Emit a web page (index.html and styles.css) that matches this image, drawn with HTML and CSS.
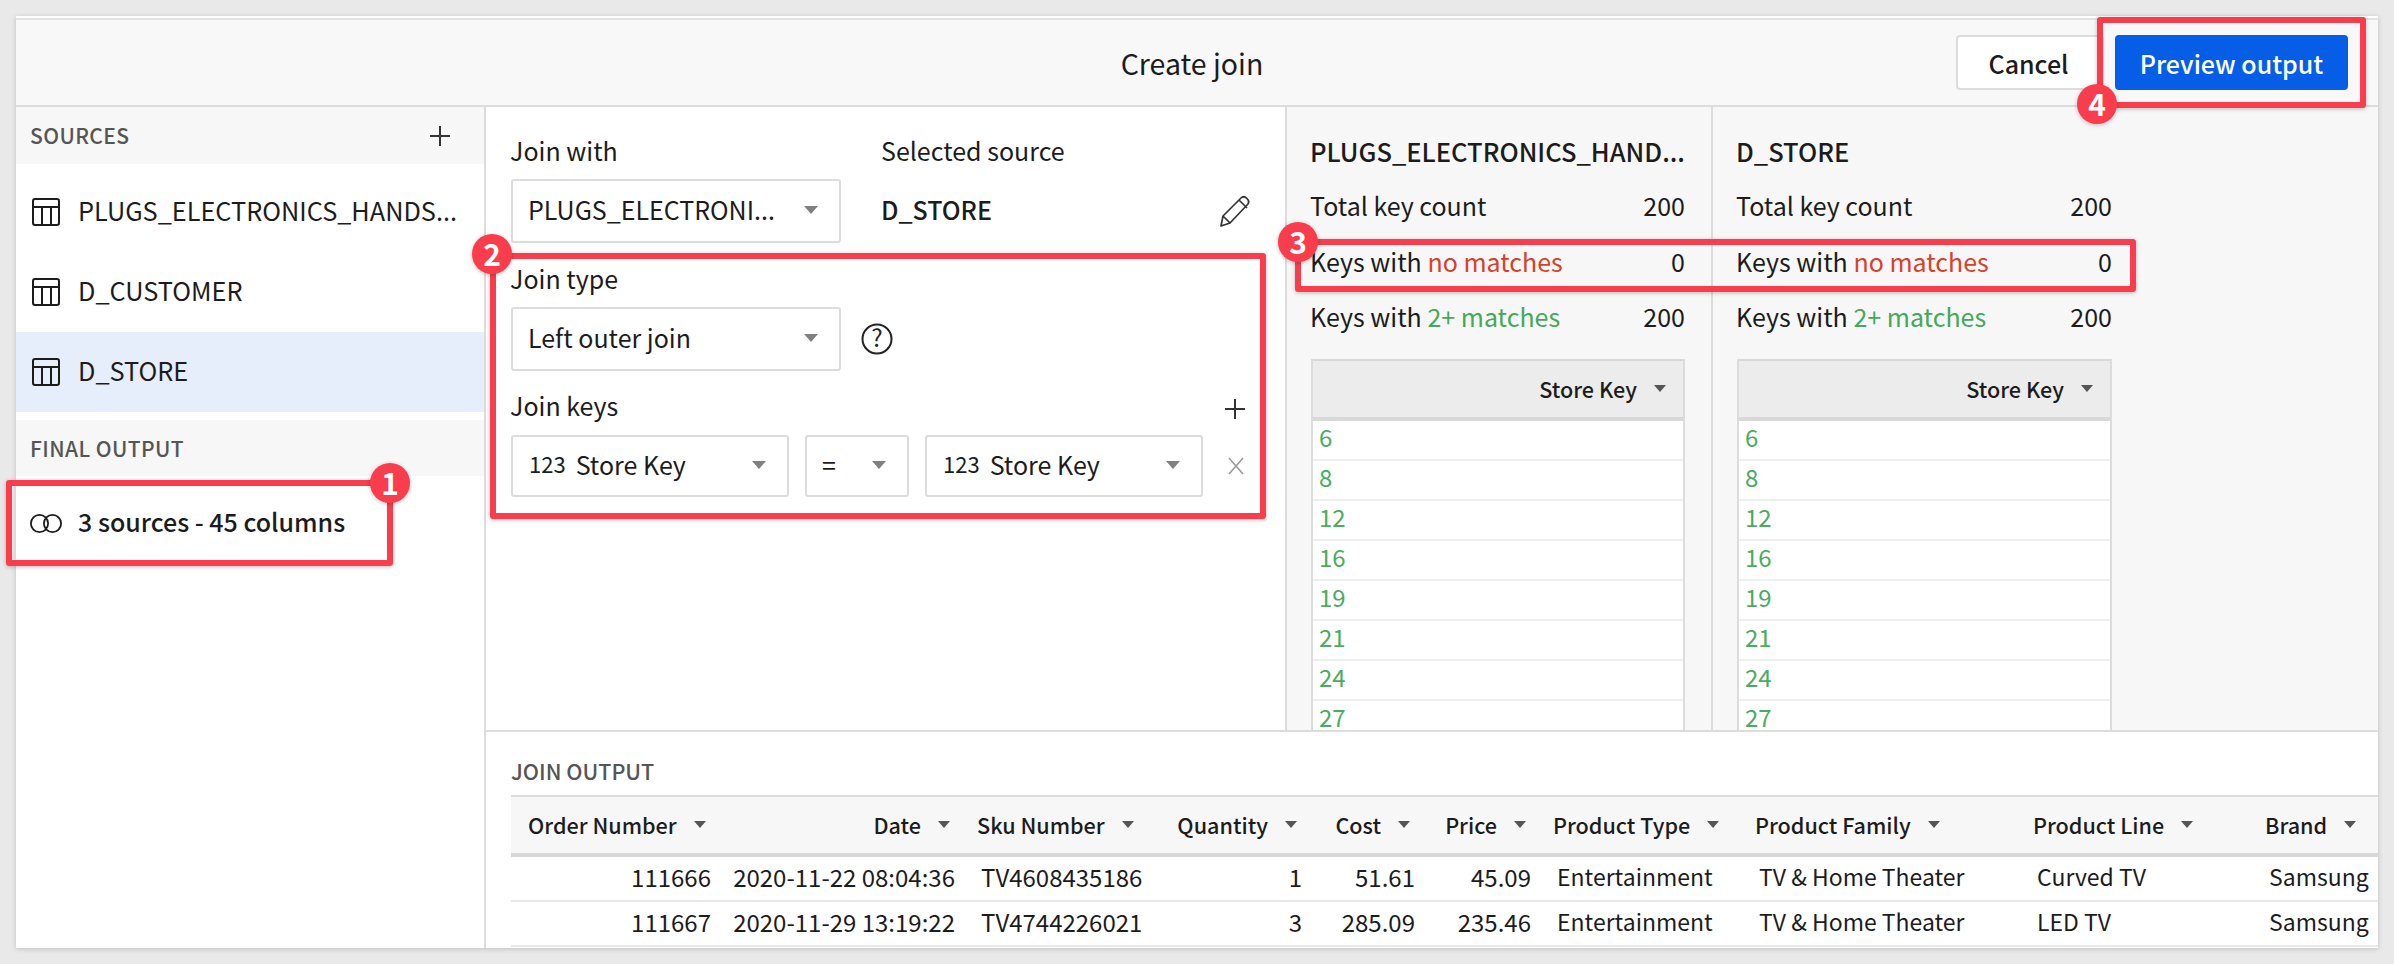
FILE: index.html
```html
<!DOCTYPE html>
<html lang="en">
<head>
    <meta charset="UTF-8">
    <title>Create join</title>
    <link rel="stylesheet" href="styles.css">
</head>
<body>
    <svg class="defs">
        <symbol id="tableIcon" viewBox="0 0 28 28">
            <rect x="1" y="1" width="26" height="26" rx="2" fill="none" stroke="currentColor" stroke-width="2"/>
            <path d="M1 9h26M10 9v18M19 9v18" fill="none" stroke="currentColor" stroke-width="2"/>
        </symbol>
        <symbol id="plusIcon" viewBox="0 0 20 20">
            <path d="M10 0v20M0 10h20" fill="none" stroke="currentColor" stroke-width="2"/>
        </symbol>
    </svg>

    <div class="dialog">
        <header class="topbar">
            <h1 class="title">Create join</h1>
            <div class="actions">
                <button class="btn btn-cancel">Cancel</button>
                <button class="btn btn-primary">Preview output</button>
            </div>
        </header>

        <div class="body">
            <aside class="sidebar">
                <div class="side-head side-head-sources">
                    <span>SOURCES</span>
                    <svg class="plus"><use href="#plusIcon"/></svg>
                </div>
                <div class="side-item"><svg class="table-icon"><use href="#tableIcon"/></svg><span>PLUGS_ELECTRONICS_HANDS...</span></div>
                <div class="side-item"><svg class="table-icon"><use href="#tableIcon"/></svg><span>D_CUSTOMER</span></div>
                <div class="side-item side-item-active"><svg class="table-icon"><use href="#tableIcon"/></svg><span>D_STORE</span></div>
                <div class="side-head side-head-final"><span>FINAL OUTPUT</span></div>
                <div class="side-item side-item-output">
                    <svg class="venn" viewBox="0 0 32 19"><circle cx="9.500" cy="9.500" r="8.600" fill="none" stroke="currentColor" stroke-width="1.800"/><circle cx="22.500" cy="9.500" r="8.600" fill="none" stroke="currentColor" stroke-width="1.800"/></svg>
                    <strong>3 sources - 45 columns</strong>
                </div>
            </aside>

            <main class="main">
                <div class="upper">
                    <section class="config">
                        <div class="config-top">
                            <div class="field-left">
                                <div class="label">Join with</div>
                                <div class="select select-wide"><span>PLUGS_ELECTRONI...</span><i class="caret"></i></div>
                            </div>
                            <div class="field-right">
                                <div class="label">Selected source</div>
                                <div class="selected-row">
                                    <strong>D_STORE</strong>
                                    <svg class="pencil" viewBox="0 0 32 33"><path d="M2 31l2-10L22 3c1.500-1.500 4-1.500 6 .5s2 4.500.5 6L11 28zM4 21l7 7M20 5l8 8" fill="none" stroke="currentColor" stroke-width="1.700" stroke-linejoin="round"/></svg>
                                </div>
                            </div>
                        </div>

                        <div class="label label-type">Join type</div>
                        <div class="type-row">
                            <div class="select select-wide"><span>Left outer join</span><i class="caret"></i></div>
                            <svg class="help" viewBox="0 0 32 32"><circle cx="16" cy="16" r="14.500" fill="none" stroke="currentColor" stroke-width="2"/><text x="16" y="24" text-anchor="middle" class="help-mark">?</text></svg>
                        </div>

                        <div class="keys-head">
                            <div class="label">Join keys</div>
                            <svg class="plus"><use href="#plusIcon"/></svg>
                        </div>
                        <div class="keys-row">
                            <div class="select select-key"><span class="key-name"><small>123</small>Store Key</span><i class="caret"></i></div>
                            <div class="select select-op"><span>=</span><i class="caret"></i></div>
                            <div class="select select-key"><span class="key-name"><small>123</small>Store Key</span><i class="caret"></i></div>
                            <svg class="remove" viewBox="0 0 18 18"><path d="M2 1l14 16M16 1L2 17" fill="none" stroke="currentColor" stroke-width="1.600"/></svg>
                        </div>
                    </section>

                    <section class="stats stats-first">
                        <h2 class="stats-title">PLUGS_ELECTRONICS_HAND...</h2>
                        <div class="stat-row"><span>Total key count</span><span>200</span></div>
                        <div class="stat-row"><span>Keys with <em class="bad">no matches</em></span><span>0</span></div>
                        <div class="stat-row"><span>Keys with <em class="good">2+ matches</em></span><span>200</span></div>
                        <div class="key-table">
                            <div class="key-head">Store Key<i class="caret caret-dark"></i></div>
                            <div class="key-cell">6</div>
                            <div class="key-cell">8</div>
                            <div class="key-cell">12</div>
                            <div class="key-cell">16</div>
                            <div class="key-cell">19</div>
                            <div class="key-cell">21</div>
                            <div class="key-cell">24</div>
                            <div class="key-cell">27</div>
                        </div>
                    </section>

                    <section class="stats stats-last">
                        <h2 class="stats-title">D_STORE</h2>
                        <div class="stat-row"><span>Total key count</span><span>200</span></div>
                        <div class="stat-row"><span>Keys with <em class="bad">no matches</em></span><span>0</span></div>
                        <div class="stat-row"><span>Keys with <em class="good">2+ matches</em></span><span>200</span></div>
                        <div class="key-table">
                            <div class="key-head">Store Key<i class="caret caret-dark"></i></div>
                            <div class="key-cell">6</div>
                            <div class="key-cell">8</div>
                            <div class="key-cell">12</div>
                            <div class="key-cell">16</div>
                            <div class="key-cell">19</div>
                            <div class="key-cell">21</div>
                            <div class="key-cell">24</div>
                            <div class="key-cell">27</div>
                        </div>
                    </section>
                </div>

                <section class="output">
                    <div class="output-label">JOIN OUTPUT</div>
                    <div class="grid grid-head">
                        <div class="th">Order Number<i class="caret caret-dark"></i></div>
                        <div class="th num">Date<i class="caret caret-dark"></i></div>
                        <div class="th">Sku Number<i class="caret caret-dark"></i></div>
                        <div class="th num">Quantity<i class="caret caret-dark"></i></div>
                        <div class="th num">Cost<i class="caret caret-dark"></i></div>
                        <div class="th num">Price<i class="caret caret-dark"></i></div>
                        <div class="th">Product Type<i class="caret caret-dark"></i></div>
                        <div class="th">Product Family<i class="caret caret-dark"></i></div>
                        <div class="th">Product Line<i class="caret caret-dark"></i></div>
                        <div class="th">Brand<i class="caret caret-dark"></i></div>
                    </div>
                    <div class="grid grid-row">
                        <div class="td num">111666</div>
                        <div class="td num">2020-11-22 08:04:36</div>
                        <div class="td code">TV4608435186</div>
                        <div class="td num">1</div>
                        <div class="td num">51.61</div>
                        <div class="td num">45.09</div>
                        <div class="td">Entertainment</div>
                        <div class="td">TV &amp; Home Theater</div>
                        <div class="td">Curved TV</div>
                        <div class="td">Samsung</div>
                    </div>
                    <div class="grid grid-row">
                        <div class="td num">111667</div>
                        <div class="td num">2020-11-29 13:19:22</div>
                        <div class="td code">TV4744226021</div>
                        <div class="td num">3</div>
                        <div class="td num">285.09</div>
                        <div class="td num">235.46</div>
                        <div class="td">Entertainment</div>
                        <div class="td">TV &amp; Home Theater</div>
                        <div class="td">LED TV</div>
                        <div class="td">Samsung</div>
                    </div>
                </section>
            </main>
        </div>
    </div>

    <!-- callouts drawn over the screenshot -->
    <div class="mark mark-1"><b class="badge">1</b></div>
    <div class="mark mark-2"><b class="badge">2</b></div>
    <div class="mark mark-3"><b class="badge">3</b></div>
    <div class="mark mark-4"><b class="badge">4</b></div>
</body>
</html>
```

FILE: styles.css
```css
* {
    box-sizing: border-box;
}
html, body {
    height: 100%;
}
body {
    margin: 0;
    padding: 16px 16px 16px;
    background-color: #e9e9e9;
    color: #1c1c1c;
    font-family: "Noto Sans CJK SC", "Noto Sans", sans-serif;
    font-size: 25px;
    line-height: 29px;
    overflow: hidden;
    position: relative;
}
.defs {
    position: absolute;
    width: 0;
    height: 0;
}
strong, b, h1, h2 {
    font-weight: 500;
    margin: 0;
}
em {
    font-style: normal;
}

/* dialog */
.dialog {
    height: 932px;
    background-color: #fff;
    border-top: 2px solid #fff;
    box-shadow: 0 1px 5px rgba(0, 0, 0, 0.18);
    display: flex;
    flex-direction: column;
}
.topbar {
    height: 89px;
    flex: none;
    background-color: #f8f8f8;
    border-top: 2px solid #e2e2e2;
    border-bottom: 2px solid #dcdcdc;
    display: flex;
    align-items: center;
    justify-content: flex-end;
    position: relative;
    padding-right: 30px;
}
.title {
    position: absolute;
    left: 0;
    right: 10px;
    text-align: center;
    font-size: 28.500px;
    font-weight: 400;
}
.actions {
    display: flex;
    gap: 11px;
}
.btn {
    height: 55px;
    font-family: inherit;
    font-size: 25px;
    font-weight: 500;
    border-radius: 4px;
    padding: 0;
}
.btn-cancel {
    width: 148px;
    background-color: #fff;
    border: 2px solid #dcdcdc;
    color: #1c1c1c;
    padding-right: 3px;
}
.btn-primary {
    width: 233px;
    background-color: #075ee6;
    border: none;
    color: #fff;
}
.body {
    flex: 1;
    display: flex;
    min-height: 0;
}

/* left column */
.sidebar {
    width: 470px;
    flex: none;
    border-right: 2px solid #dcdcdc;
}
.side-head {
    background-color: #f7f7f7;
    display: flex;
    align-items: center;
    justify-content: space-between;
    padding: 0 34px 0 14px;
    color: #555;
    font-size: 21px;
    font-weight: 500;
    letter-spacing: 0.4px;
}
.side-head-sources {
    height: 57px;
    margin-bottom: 8px;
}
.side-head-final {
    height: 56px;
    margin-top: 8px;
}
.plus {
    width: 20px;
    height: 20px;
    color: #333;
}
.side-item {
    height: 80px;
    display: flex;
    align-items: center;
    gap: 18px;
    padding-left: 16px;
    font-size: 25.300px;
}
.side-item span, .side-item strong, .select span, .selected-row strong {
    padding-bottom: 3px;
}
.side-item-active {
    background-color: #e7eefb;
}
.side-item-output {
    gap: 16px;
    padding-left: 14px;
    margin-top: 7px;
}
.side-item-output strong {
    font-size: 25px;
}
.table-icon {
    width: 28px;
    height: 28px;
    flex: none;
}
.venn {
    width: 32px;
    height: 19px;
    flex: none;
}

/* join form */
.main {
    flex: 1;
    min-width: 0;
    display: flex;
    flex-direction: column;
}
.upper {
    height: 623px;
    flex: none;
    display: flex;
    overflow: hidden;
}
.config {
    width: 801px;
    flex: none;
    padding: 29px 0 0 25px;
    border-right: 2px solid #dcdcdc;
}
.config-top {
    display: flex;
    gap: 41px;
}
.field-left {
    width: 330px;
    flex: none;
}
.field-right {
    width: 369px;
}
.label {
    height: 32px;
    margin-bottom: 11px;
    margin-left: -1px;
}
.selected-row {
    height: 64px;
    display: flex;
    align-items: center;
    justify-content: space-between;
    margin-left: -1px;
}
.pencil {
    width: 32px;
    height: 33px;
    color: #333;
}
.select {
    height: 64px;
    background-color: #fff;
    border: 2px solid #dcdcdc;
    border-radius: 3px;
    display: flex;
    align-items: center;
    justify-content: space-between;
    padding: 0 21px 0 15px;
    flex: none;
}
.select-wide {
    width: 330px;
}
.select-key {
    width: 278px;
    height: 62px;
    padding-left: 16px;
}
.select-op {
    width: 104px;
    height: 62px;
}
.key-name small {
    font-size: 22px;
    margin-right: 10px;
    position: relative;
    top: -2px;
}
.caret {
    display: inline-block;
    width: 0;
    height: 0;
    border-left: 7px solid transparent;
    border-right: 7px solid transparent;
    border-top: 8px solid #808080;
    margin-top: -2px;
}
.caret-dark {
    border-left-width: 6px;
    border-right-width: 6px;
    border-top: 7px solid #555;
    margin-top: 0;
}
.label-type {
    margin-top: 21px;
}
.type-row {
    display: flex;
    align-items: center;
    gap: 20px;
}
.help {
    width: 32px;
    height: 32px;
    color: #222;
}
.help-mark {
    font-size: 24px;
    fill: currentColor;
}
.keys-head {
    display: flex;
    justify-content: space-between;
    margin-top: 20px;
    padding-right: 40px;
}
.keys-head .label {
    margin-bottom: 12px;
}
.keys-head .plus {
    margin-top: 8px;
}
.keys-row {
    display: flex;
    align-items: center;
    gap: 16px;
}
.remove {
    width: 18px;
    height: 18px;
    color: #9a9a9a;
    margin-left: 8px;
}

/* key stats */
.stats {
    background-color: #f7f7f7;
    padding: 29px 0 0 24px;
}
.stats-first {
    width: 426px;
    flex: none;
    padding-right: 26px;
    border-right: 2px solid #dcdcdc;
}
.stats-last {
    flex: 1;
}
.stats-last > * {
    width: 375px;
}
.stats-title {
    height: 32px;
    margin-bottom: 23px;
    margin-left: -1px;
    font-size: 25.500px;
    font-weight: 500;
    white-space: nowrap;
}
.stat-row {
    height: 32px;
    margin-bottom: 23.500px;
    display: flex;
    justify-content: space-between;
}
.stat-row span:first-child {
    margin-left: -1px;
}
.bad {
    color: #d9402a;
}
.good {
    color: #45a85a;
}
.key-table {
    margin-top: 25px;
    border-left: 2px solid #dcdcdc;
    border-right: 2px solid #dcdcdc;
    background-color: #fff;
}
.key-head {
    height: 62px;
    background-color: #ececec;
    border-top: 2px solid #d8d8d8;
    border-bottom: 4px solid #d8d8d8;
    display: flex;
    align-items: center;
    justify-content: flex-end;
    gap: 17px;
    padding: 0 17px 2px 0;
    font-size: 21.600px;
    font-weight: 500;
}
.key-cell {
    height: 40px;
    border-bottom: 2px solid #eee;
    padding-left: 6px;
    color: #4bab60;
    font-size: 24px;
    line-height: 31px;
}

/* output preview */
.output {
    flex: 1;
    min-height: 0;
    overflow: hidden;
    border-top: 2px solid #dcdcdc;
    padding: 26px 0 0 25px;
}
.output-label {
    height: 32px;
    margin-bottom: 5px;
    color: #555;
    font-size: 21.500px;
    font-weight: 500;
    line-height: 26px;
}
.grid {
    display: grid;
    grid-template-columns: 210px 244px 195px 152px 113px 116px 202px 278px 232px 125px;
}
.grid-head {
    height: 62px;
    background-color: #f7f7f7;
    border-top: 2px solid #dcdcdc;
    border-bottom: 4px solid #d8d8d8;
}
.grid-row {
    height: 45px;
    border-bottom: 2px solid #e8e8e8;
    font-size: 23px;
}
.th {
    display: flex;
    align-items: center;
    gap: 17px;
    padding: 0 15px 2px 12px;
    font-size: 21.600px;
    font-weight: 500;
    white-space: nowrap;
}
.th:first-child {
    padding-left: 17px;
}
.th.num {
    justify-content: flex-end;
}
.td {
    padding: 0 10px 0 16px;
    line-height: 39px;
    white-space: nowrap;
}
.td.code {
    font-size: 24px;
}
.td.num {
    text-align: right;
    padding: 0 10px 0 0;
    font-size: 24px;
}

/* red callouts */
.mark {
    position: absolute;
    border: 6px solid #f93d4c;
    border-radius: 3px;
    box-shadow: 0 1px 4px rgba(0, 0, 0, 0.25);
}
.badge {
    position: absolute;
    width: 40px;
    height: 40px;
    border-radius: 50%;
    background-color: #f93d4c;
    color: #fff;
    font-size: 30px;
    font-weight: 700;
    line-height: 38px;
    text-align: center;
    box-shadow: 0 1px 4px rgba(0, 0, 0, 0.25);
}
.mark-1 {
    left: 6px;
    top: 480px;
    width: 387px;
    height: 86px;
}
.mark-1 .badge {
    right: -23px;
    top: -23px;
}
.mark-2 {
    left: 490px;
    top: 253px;
    width: 776px;
    height: 266px;
}
.mark-2 .badge {
    left: -24px;
    top: -25px;
}
.mark-3 {
    left: 1295px;
    top: 239px;
    width: 841px;
    height: 53px;
}
.mark-3 .badge {
    left: -23px;
    top: -23px;
}
.mark-4 {
    left: 2097px;
    top: 17px;
    width: 269px;
    height: 91px;
}
.mark-4 .badge {
    left: -26px;
    top: 61px;
}
```
